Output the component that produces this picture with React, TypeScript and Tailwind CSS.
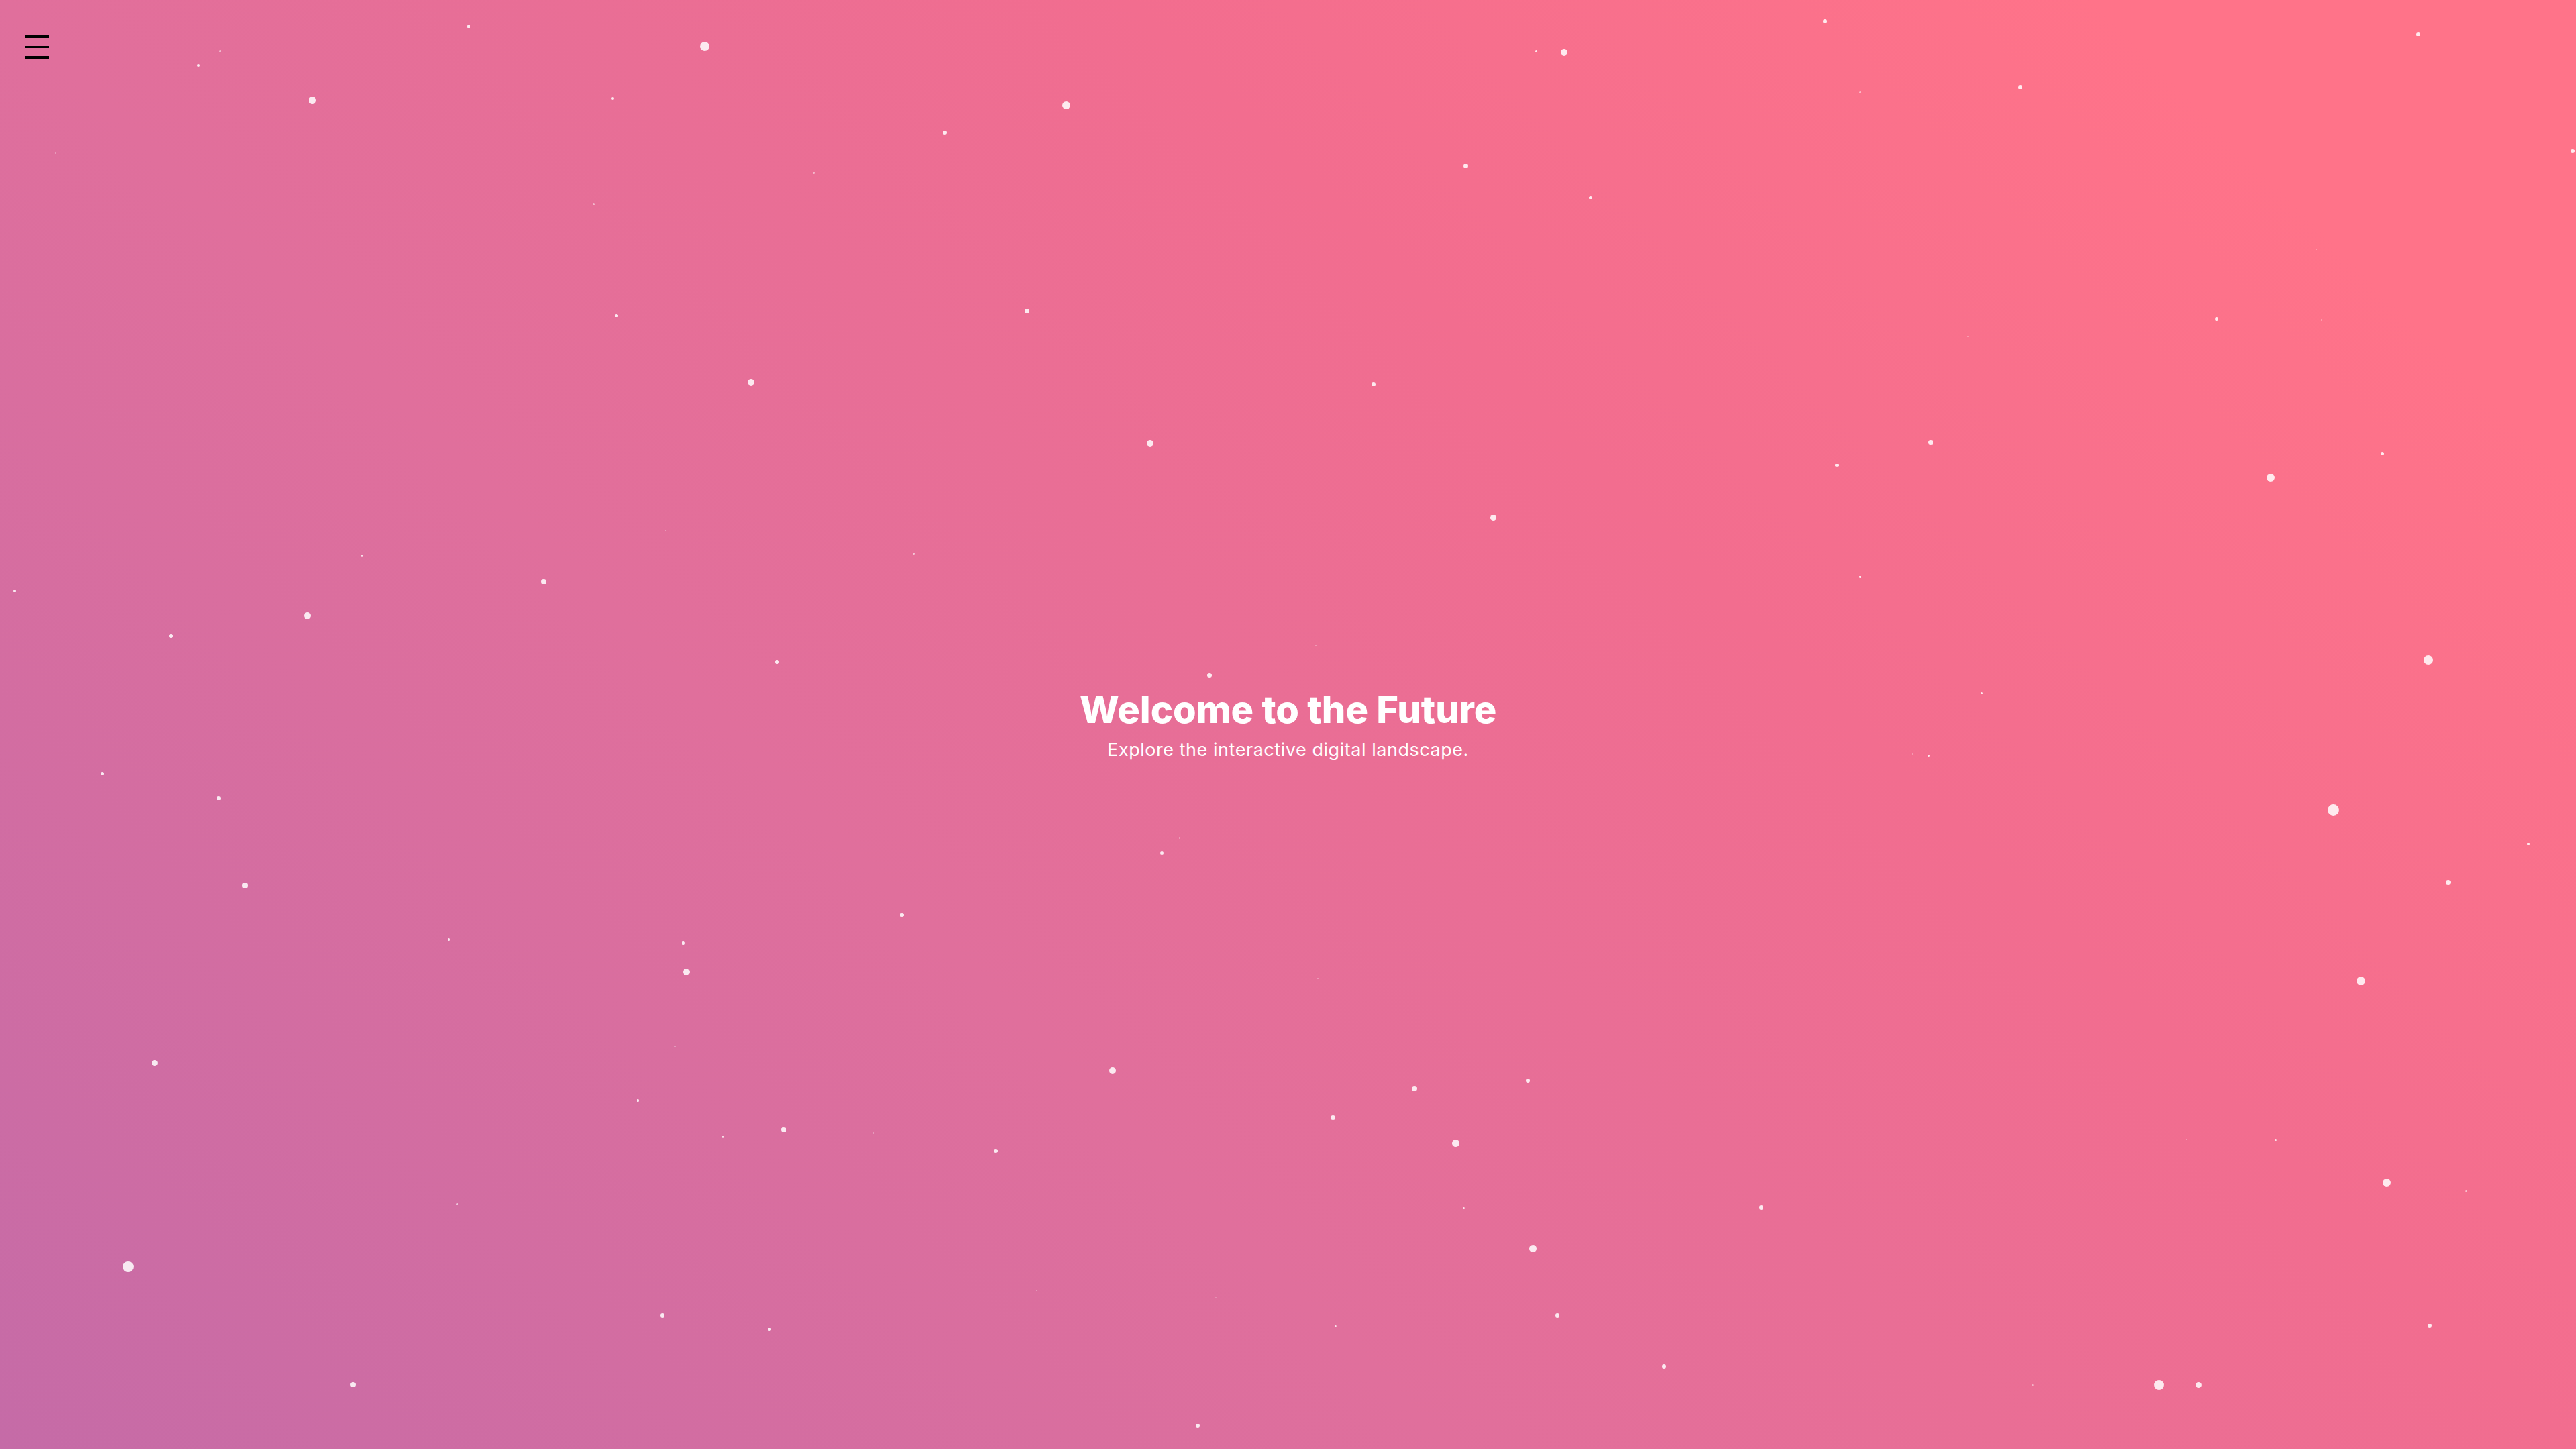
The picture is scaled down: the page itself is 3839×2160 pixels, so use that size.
import React from "react";

type Dot = [number, number, number, number?];

const dots: Dot[] = [
  [698, 39, 5], [1050, 69, 14], [296, 98, 4], [328, 76, 3, 0.5], [465, 149, 11],
  [913, 147, 4], [1589, 157, 12], [1408, 198, 6], [83, 228, 2, 0.4], [1212, 257, 3, 0.5],
  [884, 304, 3, 0.5], [2184, 247, 7], [2370, 294, 5], [2289, 76, 3], [2331, 78, 10],
  [2720, 32, 6], [3011, 130, 6], [2772, 137, 3, 0.5], [3604, 51, 6], [3834, 225, 6],
  [3452, 372, 2, 0.4], [918, 470, 5], [1530, 463, 7], [1119, 570, 10], [2047, 573, 6],
  [1714, 661, 10], [3303, 475, 5], [2933, 502, 2, 0.4], [2877, 659, 7], [2737, 693, 5],
  [3550, 676, 5], [3384, 712, 12], [2225, 771, 9], [3460, 477, 2, 0.4], [539, 828, 3],
  [992, 791, 2, 0.4], [1361, 825, 3, 0.6], [810, 867, 8], [22, 881, 4], [458, 918, 10],
  [255, 948, 6], [1158, 987, 6], [1802, 1006, 7], [1961, 962, 2, 0.4], [2772, 859, 3],
  [2953, 1033, 3], [3619, 984, 14], [152, 1153, 5], [326, 1190, 6], [2850, 1124, 2, 0.4],
  [2874, 1126, 3], [1758, 1249, 2, 0.4], [1731, 1271, 5], [3477, 1207, 17], [3768, 1258, 4],
  [365, 1320, 8], [1344, 1364, 6], [3648, 1315, 7], [668, 1400, 3], [1018, 1405, 5],
  [1023, 1449, 10], [1964, 1459, 2, 0.4], [3518, 1462, 13], [230, 1584, 9], [1006, 1560, 2, 0.4],
  [1658, 1596, 10], [2108, 1623, 8], [2277, 1611, 6], [950, 1640, 3], [1986, 1665, 7],
  [1168, 1684, 8], [1077, 1694, 3], [1302, 1689, 2, 0.4], [1484, 1716, 6], [2169, 1704, 11],
  [3259, 1699, 2, 0.4], [3391, 1699, 3], [3557, 1763, 12], [3675, 1775, 3, 0.6], [681, 1795, 3, 0.6],
  [2181, 1800, 3], [2625, 1800, 6], [2284, 1861, 11], [191, 1888, 16], [1545, 1924, 2, 0.4],
  [1812, 1934, 2, 0.3], [987, 1961, 6], [2321, 1961, 6], [1146, 1981, 5], [1990, 1976, 3],
  [3621, 1976, 6], [2480, 2037, 6], [526, 2064, 8], [3217, 2064, 15], [3276, 2064, 9],
  [3029, 2064, 3, 0.5], [1785, 2125, 6],
];

export default function App() {
  return (
    <div className="relative h-screen w-full overflow-hidden bg-[linear-gradient(45deg,#c56ba7_0%,#e06f9c_36%,#f26d8f_64%,#ff7389_88%,#ff7389_100%)] font-['Inter','Noto_Sans',sans-serif]">
      {dots.map(([x, y, s, o], i) => (
        <span
          key={i}
          className="absolute rounded-full bg-white"
          style={{
            left: x - s / 2,
            top: y - s / 2,
            width: s,
            height: s,
            opacity: o ?? 0.85,
          }}
        />
      ))}

      <button className="absolute left-[38px] top-[52px] flex flex-col gap-[12px] p-0">
        <span className="block h-[4px] w-[35px] bg-black" />
        <span className="block h-[4px] w-[35px] bg-black" />
        <span className="block h-[4px] w-[35px] bg-black" />
      </button>

      <div className="flex h-full w-full items-center justify-center">
        <div className="flex flex-col items-center text-white">
          <h1 className="text-[56px] font-extrabold leading-[70px] tracking-[0em]">
            Welcome to the Future
          </h1>
          <p className="mt-[6px] text-[27px] leading-[37.5px] tracking-[0.02em]">
            Explore the interactive digital landscape.
          </p>
        </div>
      </div>
    </div>
  );
}
